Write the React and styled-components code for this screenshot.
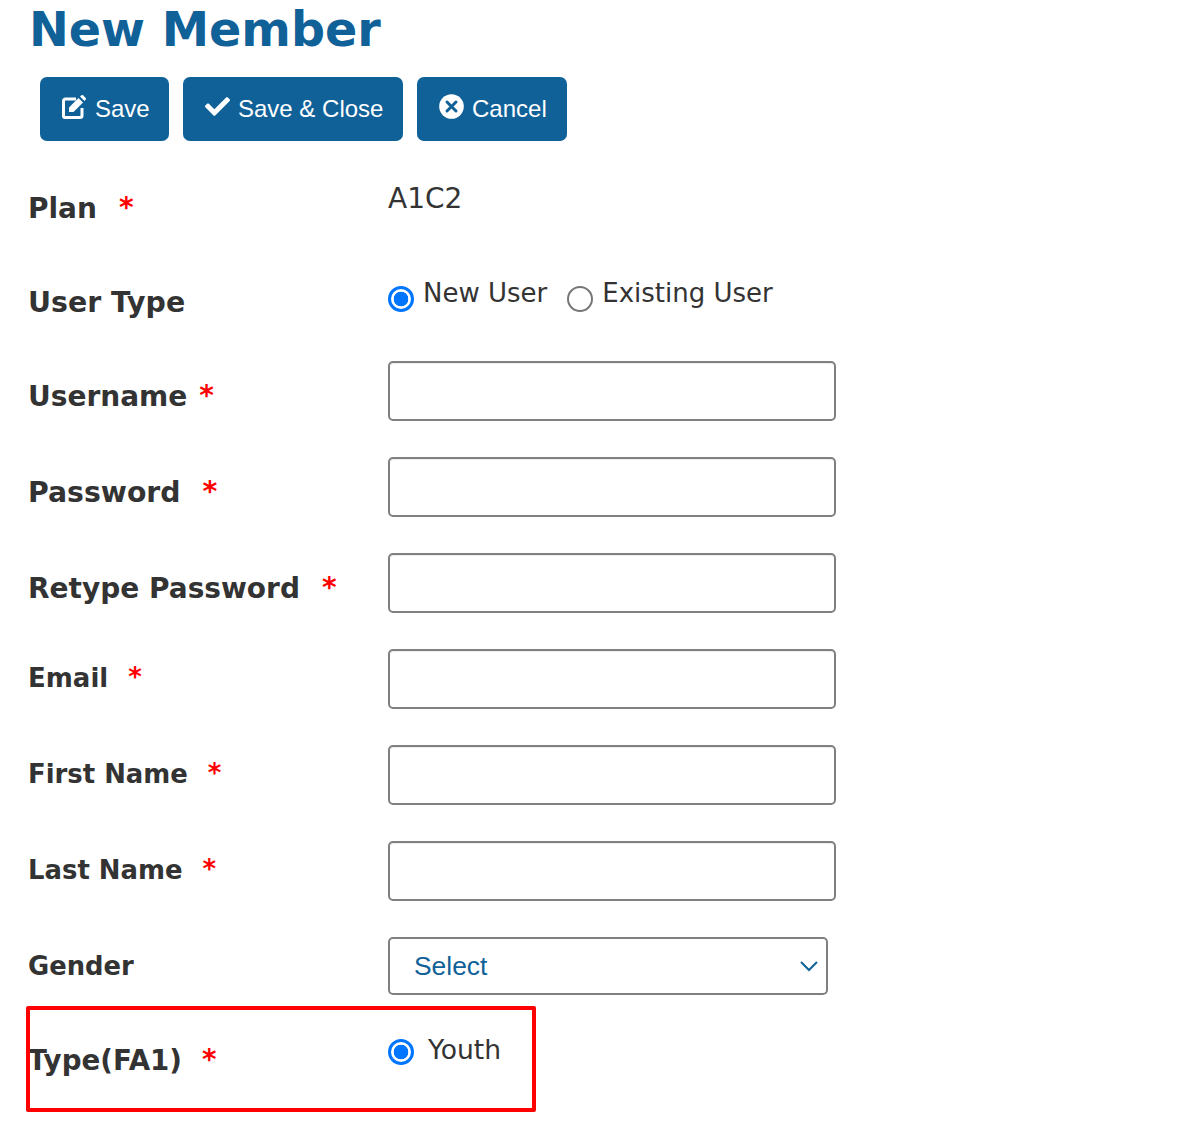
import React from "react";
import styled, { createGlobalStyle } from "styled-components";
import { FaCheck } from "react-icons/fa";

const Global = createGlobalStyle`
  html, body { margin: 0; padding: 0; background: #fff; }
  body { font-family: "DejaVu Sans", Verdana, sans-serif; color: #333; }
  * { box-sizing: border-box; }
`;

const Page = styled.div`
  width: 1204px;
  height: 1132px;
  overflow: hidden;
  padding-left: 29px;
`;

const Title = styled.h1`
  margin: 0;
  height: 77px;
  font-size: 47.6px;
  line-height: 59px;
  font-weight: 700;
  color: #106198;
`;

const Toolbar = styled.div`
  display: flex;
  gap: 14px;
  margin-left: 11px;
  height: 64px;
`;

const Button = styled.button`
  display: flex;
  align-items: center;
  gap: ${(p) => p.$gap}px;
  height: 64px;
  width: ${(p) => p.$w}px;
  padding: 0 0 0 ${(p) => p.$pl}px;
  border: 0;
  border-radius: 7px;
  background: #106198;
  color: #fff;
  font-family: "Liberation Sans", Arial, sans-serif;
  font-size: 24px;
  svg { flex: none; margin-top: -5px; }
`;

const Row = styled.div`
  display: flex;
  height: ${(p) => p.$h}px;
`;

const Label = styled.label`
  width: 360px;
  margin-left: -1px;
  flex: none;
  padding-top: ${(p) => p.$top}px;
  font-size: ${(p) => p.$size}px;
  line-height: 34px;
  font-weight: 700;
  color: #333;
  white-space: nowrap;
`;

const Star = styled.span`
  color: #f00;
  margin-left: ${(p) => p.$ml}px;
  position: relative;
  top: -1px;
`;

const Control = styled.div`
  padding-top: ${(p) => p.$top}px;
  display: flex;
  align-items: flex-start;
`;

const Value = styled.span`
  font-size: 28px;
  line-height: 34px;
  color: #333;
`;

const TextInput = styled.input`
  display: block;
  width: 448px;
  height: 60px;
  border: 2px solid #808080;
  border-radius: 5px;
  background: #fff;
  box-shadow: inset 0 1px 1px rgba(0, 0, 0, 0.075);
`;

const SelectWrap = styled.div`
  position: relative;
  width: 440px;
  height: 58px;
  svg { position: absolute; right: 10px; top: 23px; pointer-events: none; }
`;

const Select = styled.select`
  appearance: none;
  display: block;
  width: 100%;
  height: 100%;
  padding: 0 0 0 24px;
  border: 2px solid #808080;
  border-radius: 5px;
  background: #fff;
  color: #106198;
  font-family: "Liberation Sans", Arial, sans-serif;
  font-size: 26.4px;
`;

const Radio = styled.input`
  appearance: none;
  flex: none;
  width: 26px;
  height: 26px;
  margin: 0;
  border-radius: 50%;
  border: 2px solid #767676;
  background: #fff;
  &:checked {
    border: 3px solid #0075ff;
    background: radial-gradient(circle, #0075ff 0 7px, #fff 7.6px);
  }
`;

const RadioText = styled.span`
  font-size: ${(p) => p.$size}px;
  line-height: 34px;
  margin-top: ${(p) => p.$mt}px;
  margin-left: ${(p) => p.$ml}px;
  margin-right: ${(p) => p.$mr}px;
  color: #333;
`;

const Highlight = styled.div`
  position: absolute;
  left: 26px;
  top: 1006px;
  width: 510px;
  height: 106px;
  border: 4px solid #f00;
  border-radius: 2px;
  pointer-events: none;
`;

const EditIcon = () => (
  <svg width="24" height="24" viewBox="0 0 24 24">
    <path d="M14 4H3.5A2 2 0 0 0 1.5 6v15a1.5 1.5 0 0 0 1.5 1.5h15a2 2 0 0 0 2-2V13" fill="none" stroke="#fff" strokeWidth="3" />
    <path d="M7 12.5 16.5 3l4.5 4.5-9.5 9.5H7z" fill="#fff" />
    <path d="M18 1.5 19.4.3a1.2 1.2 0 0 1 1.7 0l2.6 2.6a1.2 1.2 0 0 1 0 1.7L22.5 6z" fill="#fff" />
  </svg>
);

const CancelIcon = () => (
  <svg width="25" height="25" viewBox="0 0 25 25">
    <circle cx="12.5" cy="12.5" r="12.3" fill="#fff" />
    <path d="M8 8l9 9M17 8l-9 9" stroke="#106198" strokeWidth="3" strokeLinecap="round" />
  </svg>
);

const inputs = [
  ["Username", 12, 35, 28],
  ["Password", 22, 35, 28.3],
  ["Retype Password", 22, 35, 28],
  ["Email", 20, 28, 26],
  ["First Name", 20, 28, 25.9],
  ["Last Name", 20, 28, 25.9],
];

export default function App() {
  return (
    <Page>
      <Global />
      <Title>New Member</Title>
      <Toolbar>
        <Button $w={129} $pl={22} $gap={9}><EditIcon />Save</Button>
        <Button $w={220} $pl={22} $gap={8}><FaCheck size={25} />Save &amp; Close</Button>
        <Button $w={150} $pl={22} $gap={8}><CancelIcon />Cancel</Button>
      </Toolbar>
      <Row $h={110}>
        <Label $top={51} $size={28}>Plan<Star $ml={22}>*</Star></Label>
        <Control $top={41}><Value>A1C2</Value></Control>
      </Row>
      <Row $h={94}>
        <Label $top={35} $size={28.4}>User Type</Label>
        <Control $top={35}>
          <Radio type="radio" name="ut" defaultChecked />
          <RadioText $size={26} $mt={-10} $ml={9} $mr={20}>New User</RadioText>
          <Radio type="radio" name="ut" />
          <RadioText $size={26} $mt={-10} $ml={9} $mr={0}>Existing User</RadioText>
        </Control>
      </Row>
      {inputs.map(([name, ml, top, size]) => (
        <Row key={name} $h={96}>
          <Label $top={top} $size={size}>{name}<Star $ml={ml}>*</Star></Label>
          <Control $top={16}><TextInput type="text" /></Control>
        </Row>
      ))}
      <Row $h={96}>
        <Label $top={28} $size={25.8}>Gender</Label>
        <Control $top={16}>
          <SelectWrap>
            <Select defaultValue="s"><option value="s">Select</option></Select>
            <svg width="18" height="12" viewBox="0 0 18 12" fill="none" stroke="#106198" strokeWidth="2"><path d="M1 2l8 8 8-8" /></svg>
          </SelectWrap>
        </Control>
      </Row>
      <Row $h={90}>
        <Label $top={27} $size={27.7}>Type(FA1)<Star $ml={20}>*</Star></Label>
        <Control $top={22}>
          <Radio type="radio" name="ty" defaultChecked />
          <RadioText $size={26.6} $mt={-6} $ml={14} $mr={0}>Youth</RadioText>
        </Control>
      </Row>
      <Highlight />
    </Page>
  );
}
